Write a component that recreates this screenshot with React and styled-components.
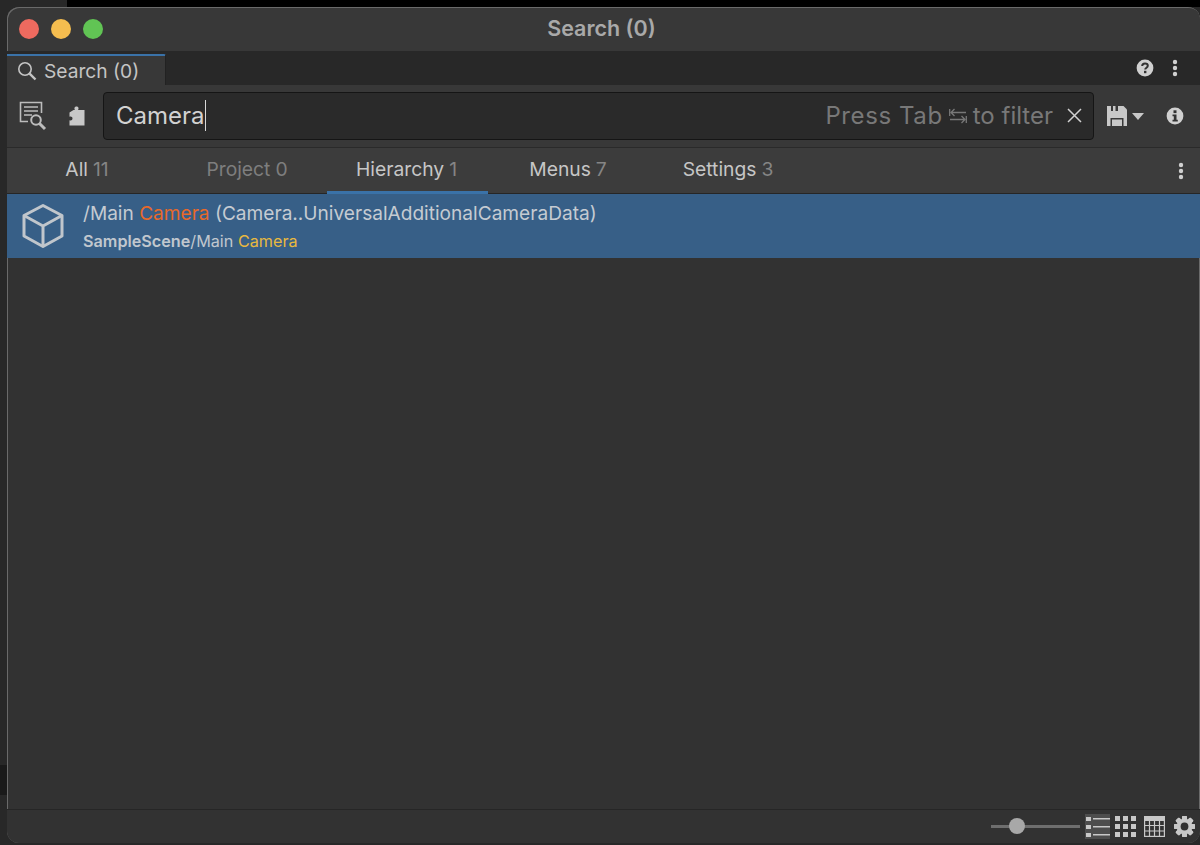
import React from "react";
import styled, { createGlobalStyle } from "styled-components";

const Global = createGlobalStyle`
  html, body { margin: 0; padding: 0; height: 100%; background: #262626; overflow: hidden; }
  #root { height: 100%; }
  * { box-sizing: border-box; }
`;

const Desktop = styled.div`
  width: 1200px;
  height: 845px;
  padding: 7px 0 2px 7px;
  font-family: Inter, "Noto Sans", sans-serif;
  background:
    linear-gradient(#000, #000) 67px 0 / 1133px 7px no-repeat,
    linear-gradient(#1a1a1a, #1a1a1a) 0 765px / 7px 30px no-repeat,
    #282828;
`;

const Win = styled.div`
  width: 100%;
  height: 100%;
  border-radius: 12px;
  box-shadow: inset 0 0 0 1px #6a6a6a;
  background: #323232;
  overflow: hidden;
  display: flex;
  flex-direction: column;
  position: relative;
`;

const TitleBar = styled.div`
  height: 44px;
  flex: none;
  background: #383838;
  display: flex;
  align-items: center;
  position: relative;
  padding-left: 12px;
  gap: 12px;
  border-radius: 12px 12px 0 0;
  box-shadow: inset 1px 1px 0 #6a6a6a;
`;

const Light = styled.span`
  width: 20px;
  height: 20px;
  border-radius: 50%;
  background: ${(p) => p.$c};
`;

const Title = styled.div`
  position: absolute;
  left: 0;
  right: 4px;
  top: 0;
  line-height: 42px;
  text-align: center;
  color: #a9a9a9;
  font-size: 21.5px;
  font-weight: 600;
`;

const TabStrip = styled.div`
  height: 34px;
  flex: none;
  background: #282828;
  display: flex;
  align-items: stretch;
  justify-content: space-between;
  padding-right: 22px;
`;

const WinTab = styled.div`
  width: 159px;
  margin-top: 3px;
  background: #383838;
  border-top: 2px solid #3a72a8;
  border-top-right-radius: 2px;
  display: flex;
  align-items: center;
  padding-left: 10px;
  gap: 7px;
  color: #c4c4c4;
  font-size: 19.2px;
  border-right: 1px solid #222;
`;

const StripIcons = styled.div`
  display: flex;
  align-items: center;
  gap: 18px;
`;

const Toolbar = styled.div`
  height: 63px;
  flex: none;
  background: #383838;
  border-bottom: 1px solid #2a2a2a;
  display: flex;
  align-items: center;
  padding: 0 15px 0 12px;
`;

const LeftIcons = styled.div`
  display: flex;
  align-items: center;
  gap: 21px;
  width: 84px;
  flex: none;
`;

const SearchBox = styled.div`
  width: 991px;
  height: 48px;
  flex: none;
  margin-top: -1px;
  border-radius: 4px;
  background: #2a2a2a;
  border: 1px solid #151515;
  display: flex;
  align-items: center;
  padding: 0 11px 0 12px;
  font-size: 24px;
`;

const Query = styled.span`
  color: #d2d2d2;
  border-right: 1px solid #d8d8d8;
  line-height: 31px;
`;

const Hint = styled.span`
  margin-left: auto;
  color: #787878;
  display: flex;
  align-items: center;
  gap: 6px;
  font-size: 24px;
`;

const HintStart = styled.span`
  letter-spacing: 0.6px;
`;

const ClearBtn = styled.span`
  display: flex;
  margin-left: 8px;
`;

const RightIcons = styled.div`
  display: flex;
  align-items: center;
  margin-left: 13px;
  gap: 22px;
`;

const SaveWrap = styled.div`
  display: flex;
  align-items: center;
  gap: 5px;
`;

const TabsBar = styled.div`
  height: 46px;
  flex: none;
  background: #3c3c3c;
  border-bottom: 1px solid #262626;
  display: flex;
  align-items: stretch;
  padding-right: 16px;
  position: relative;
`;

const FilterTab = styled.div`
  width: ${(p) => p.$w}px;
  display: flex;
  align-items: center;
  justify-content: center;
  white-space: nowrap;
  font-size: 19.3px;
  color: ${(p) => (p.$dim ? "#7e7e7e" : "#c6c6c6")};
  border-bottom: 3px solid ${(p) => (p.$on ? "#3a72a8" : "transparent")};
  margin-bottom: -1px;
  padding-bottom: 2px;
  padding-right: ${(p) => (p.$on ? 2 : 0)}px;
`;

const Count = styled.span`
  color: ${(p) => (p.$dim ? "#7e7e7e" : "#858585")};
  margin-left: 5px;
`;

const TabMore = styled.div`
  margin-left: auto;
  display: flex;
  align-items: center;
`;

const Results = styled.div`
  flex: 1;
  min-height: 0;
`;

const Row = styled.div`
  height: 64px;
  background: #375f87;
  display: flex;
  align-items: center;
  padding-left: 14px;
  gap: 18px;
`;

const RowText = styled.div`
  display: flex;
  flex-direction: column;
  gap: 9px;
  padding-top: 1px;
`;

const Line1 = styled.div`
  color: #c5cbd2;
  font-size: 19.1px;
  line-height: 20px;
  white-space: nowrap;
`;

const Line2 = styled.div`
  color: #c1c7ce;
  font-size: 16.2px;
  line-height: 18px;
  white-space: nowrap;
`;

const Strong = styled.b`
  font-weight: 600;
`;

const Orange = styled.span`
  color: #e8692a;
`;

const Yellow = styled.span`
  color: #e8b93f;
`;

const Footer = styled.div`
  height: 34px;
  flex: none;
  border-top: 1px solid #262626;
  background: #323232;
  display: flex;
  align-items: center;
  justify-content: flex-end;
  padding-right: 5px;
`;

const Slider = styled.div`
  width: 89px;
  height: 3px;
  background: #6e6e6e;
  position: relative;
  margin-right: 5px;
`;

const Thumb = styled.span`
  position: absolute;
  left: 18px;
  top: -7px;
  width: 16px;
  height: 16px;
  border-radius: 50%;
  background: #a8a8a8;
`;

const ViewBtn = styled.div`
  width: 25px;
  height: 25px;
  display: flex;
  align-items: center;
  justify-content: center;
  margin-right: ${(p) => p.$mr}px;
  background: ${(p) => (p.$on ? "#4d4d4d" : "transparent")};
`;

const MagnifierIcon = () => (
  <svg width="20" height="20" viewBox="0 0 20 20" fill="none" stroke="#c4c4c4" strokeWidth="1.6">
    <circle cx="8" cy="8" r="6.2" />
    <path d="M12.6 12.6 18.5 18.5" strokeWidth="2.4" />
  </svg>
);

const HelpIcon = () => (
  <svg width="18" height="18" viewBox="0 0 18 18">
    <circle cx="9" cy="9" r="8.4" fill="#d0d0d0" />
    <path d="M6.2 7c0-1.6 1.2-2.5 2.8-2.5S11.8 5.4 11.8 6.8c0 1.9-2.6 1.9-2.6 3.8" fill="none" stroke="#333" strokeWidth="2" />
    <rect x="8" y="11.8" width="2.4" height="2.4" fill="#333" />
  </svg>
);

const Dots = () => (
  <svg width="6" height="18" viewBox="0 0 6 18" fill="#d0d0d0">
    <circle cx="3" cy="3" r="2.2" />
    <circle cx="3" cy="9" r="2.2" />
    <circle cx="3" cy="15" r="2.2" />
  </svg>
);

const QueryBuilderIcon = () => (
  <svg width="28" height="30" viewBox="0 0 28 30" fill="none" stroke="#bcbcbc" strokeWidth="1.6">
    <path d="M9 20.5H1.5V1.5H22.5V12" />
    <path d="M5 6h14M5 10h14M5 14h8" strokeWidth="1.5" />
    <circle cx="17" cy="19" r="4.8" strokeWidth="2" />
    <path d="M20.5 22.5 26 28" strokeWidth="3" />
  </svg>
);

const PuzzleIcon = () => (
  <svg width="17" height="20" viewBox="0 0 17 20" fill="#c8c8c8">
    <path d="M5.5 4h1.5C6 2.8 6.3.5 8.5.5S11 2.8 10 4h6.5v15.5H1.5v-5.3c1.6.6 3-.2 3-1.7s-1.4-2.3-3-1.7V6.5L5.5 4z" />
  </svg>
);

const TabArrows = () => (
  <svg width="18" height="16" viewBox="0 0 18 16" fill="none" stroke="#787878" strokeWidth="1.3">
    <path d="M17 4.5H2M5.5 1 2 4.5 5.5 8" />
    <path d="M1 11.5H16M12.5 8 16 11.5 12.5 15" />
    <path d="M.7 1v7M17.3 8v7" />
  </svg>
);

const CloseIcon = () => (
  <svg width="15" height="15" viewBox="0 0 15 15" fill="none" stroke="#d2d2d2" strokeWidth="1.5">
    <path d="M1 1 14 14M14 1 1 14" />
  </svg>
);

const SaveIcon = () => (
  <svg width="20" height="20" viewBox="0 0 20 20" fill="#c8c8c8">
    <path d="M0 0H16.5L20 3.5V20H0z" />
    <rect x="4" y="0" width="2" height="5" fill="#383838" />
    <rect x="8.5" y="0" width="2.5" height="5" fill="#383838" />
    <rect x="3.5" y="12" width="13" height="8" fill="#383838" />
    <rect x="5" y="13.5" width="10" height="6.5" fill="#c8c8c8" />
  </svg>
);

const Caret = () => (
  <svg width="12" height="7" viewBox="0 0 12 7" fill="#c8c8c8">
    <path d="M0 0H12L6 7z" />
  </svg>
);

const InfoIcon = () => (
  <svg width="18" height="18" viewBox="0 0 18 18">
    <circle cx="9" cy="9" r="8.4" fill="#d0d0d0" />
    <rect x="7.5" y="3.3" width="3" height="2.8" fill="#333" />
    <path d="M6.5 7.5H10.5V12.8H11.8V14.5H6.5V12.8H7.8V9.2H6.5z" fill="#333" />
  </svg>
);

const CubeIcon = () => (
  <svg width="44" height="46" viewBox="0 0 44 46" fill="none" stroke="#c0c6cc" strokeWidth="3" strokeLinejoin="round">
    <path d="M22 2.5 41 12.5V33L22 43.5 3 33V12.5z" />
    <path d="M3 12.5 22 23 41 12.5M22 23V43.5" />
  </svg>
);

const ListIcon = () => (
  <svg width="24" height="22" viewBox="0 0 24 22" fill="#c8c8c8">
    <rect x="0" y="1" width="5" height="4" />
    <rect x="0" y="9" width="5" height="4" />
    <rect x="0" y="17" width="5" height="4" />
    <rect x="7" y="2" width="17" height="1.5" />
    <rect x="7" y="10" width="17" height="1.5" />
    <rect x="7" y="18" width="17" height="1.5" />
  </svg>
);

const GridIcon = () => (
  <svg width="22" height="21" viewBox="0 0 22 21" fill="#c8c8c8">
    {[0, 8, 16].map((y) =>
      [0, 8, 16].map((x) => <rect key={`${x}-${y}`} x={x} y={y} width="5" height="5" />)
    )}
  </svg>
);

const TableIcon = () => (
  <svg width="21" height="21" viewBox="0 0 21 21" fill="none" stroke="#c8c8c8" strokeWidth="1.2">
    <rect x="0.6" y="0.6" width="19.8" height="19.8" />
    <rect x="0" y="0" width="21" height="5" fill="#c8c8c8" stroke="none" />
    <path d="M5.5 4V21M10.5 4V21M15.5 4V21M0 9.5H21M0 15H21" />
  </svg>
);

const GearIcon = () => (
  <svg width="21" height="21" viewBox="0 0 20 20">
    <g fill="#c8c8c8">
      {[0, 45, 90, 135, 180, 225, 270, 315].map((a) => (
        <rect key={a} x="7.6" y="0" width="4.8" height="20" rx="1" transform={`rotate(${a} 10 10)`} />
      ))}
      <circle cx="10" cy="10" r="7.5" />
    </g>
    <circle cx="10" cy="10" r="3.7" fill="#323232" />
  </svg>
);

export default function App() {
  return (
    <>
      <Global />
      <Desktop>
        <Win>
          <TitleBar>
            <Light $c="#ee6a5f" />
            <Light $c="#f5bd4f" />
            <Light $c="#61c454" />
            <Title>Search (0)</Title>
          </TitleBar>
          <TabStrip>
            <WinTab>
              <MagnifierIcon />
              Search (0)
            </WinTab>
            <StripIcons>
              <HelpIcon />
              <Dots />
            </StripIcons>
          </TabStrip>
          <Toolbar>
            <LeftIcons>
              <QueryBuilderIcon />
              <PuzzleIcon />
            </LeftIcons>
            <SearchBox>
              <Query>Camera</Query>
              <Hint>
                <HintStart>Press Tab</HintStart>
                <TabArrows />
                to filter
                <ClearBtn>
                  <CloseIcon />
                </ClearBtn>
              </Hint>
            </SearchBox>
            <RightIcons>
              <SaveWrap>
                <SaveIcon />
                <Caret />
              </SaveWrap>
              <InfoIcon />
            </RightIcons>
          </Toolbar>
          <TabsBar>
            <FilterTab $w={160}>
              All<Count>11</Count>
            </FilterTab>
            <FilterTab $w={160} $dim>
              Project<Count $dim>0</Count>
            </FilterTab>
            <FilterTab $w={161} $on>
              Hierarchy<Count>1</Count>
            </FilterTab>
            <FilterTab $w={160}>
              Menus<Count>7</Count>
            </FilterTab>
            <FilterTab $w={160}>
              Settings<Count>3</Count>
            </FilterTab>
            <TabMore>
              <Dots />
            </TabMore>
          </TabsBar>
          <Results>
            <Row>
              <CubeIcon />
              <RowText>
                <Line1>
                  /Main <Orange>Camera</Orange> (Camera..UniversalAdditionalCameraData)
                </Line1>
                <Line2>
                  <Strong>SampleScene</Strong>/Main <Yellow>Camera</Yellow>
                </Line2>
              </RowText>
            </Row>
          </Results>
          <Footer>
            <Slider>
              <Thumb />
            </Slider>
            <ViewBtn $on $mr={3}>
              <ListIcon />
            </ViewBtn>
            <ViewBtn $mr={4}>
              <GridIcon />
            </ViewBtn>
            <ViewBtn $mr={7}>
              <TableIcon />
            </ViewBtn>
            <GearIcon />
          </Footer>
        </Win>
      </Desktop>
    </>
  );
}
